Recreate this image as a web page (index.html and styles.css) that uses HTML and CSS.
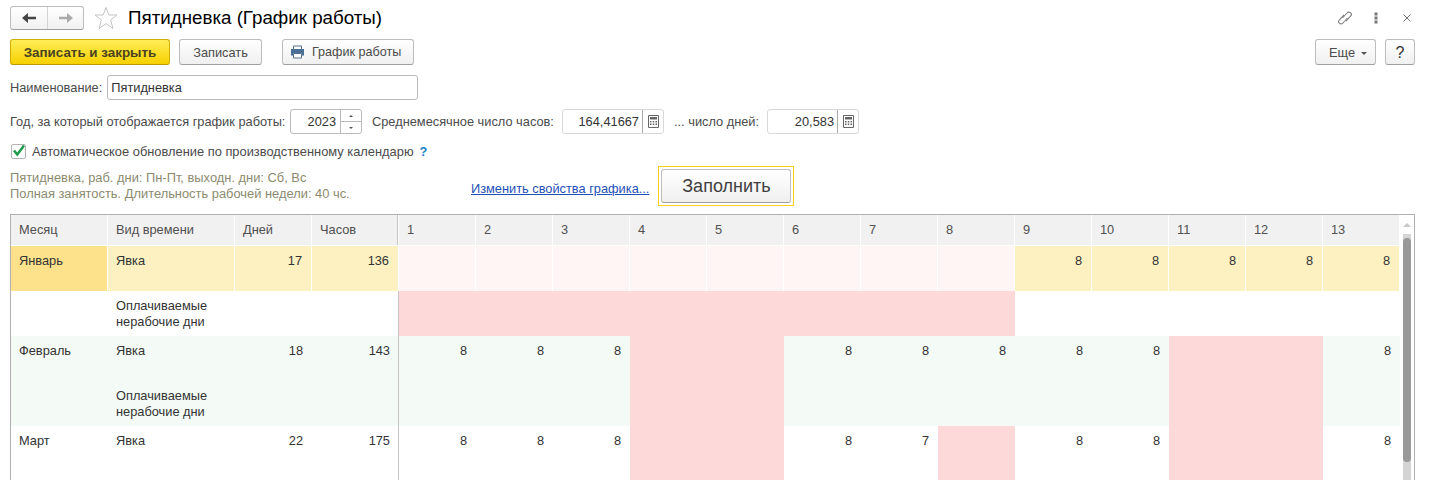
FILE: index.html
```html
<!DOCTYPE html>
<html lang="ru">
<head>
<meta charset="utf-8">
<title>Пятидневка (График работы)</title>
<link rel="stylesheet" href="styles.css">
</head>
<body>
<div class="page">
  <header class="titlebar">
    <div class="nav">
      <span class="nav-btn nav-back"><svg width="16" height="12" viewBox="0 0 16 12"><path d="M1 6 7 1V4.700H15V7.300H7V11Z" fill="#444"/></svg></span>
      <span class="nav-btn"><svg width="16" height="12" viewBox="0 0 16 12"><path d="M15 6 9 1V4.700H1V7.300H9V11Z" fill="#aaa"/></svg></span>
    </div>
    <svg class="star" width="24" height="24" viewBox="0 0 24 24"><path d="M12 1.500 14.900 9H23L16.600 14 19 22.500 12 17.600 5 22.500 7.400 14 1 9H9.100Z" fill="#fff" stroke="#c4c4c4"/></svg>
    <h1 class="title">Пятидневка (График работы)</h1>
    <div class="win-icons">
      <svg width="16" height="16" viewBox="0 0 16 16" fill="none" stroke="#808080" stroke-width="1.100"><path d="M5.500 8 10 3a2.400 2.400 0 0 1 3.800 3L9 11"/><path d="M10.500 8 6 13a2.400 2.400 0 0 1-3.800-3L7 5"/></svg>
      <svg class="kebab" width="4" height="12" viewBox="0 0 4 12"><rect x="0.500" y="0.500" width="3" height="3" fill="#777"/><rect x="0.500" y="4.500" width="3" height="3" fill="#777"/><rect x="0.500" y="8.500" width="3" height="3" fill="#777"/></svg>
      <svg class="close" width="8" height="8" viewBox="0 0 8 8"><path d="M.5.500 7.500 7.500M7.500.500.5 7.500" stroke="#777" stroke-width="1"/></svg>
    </div>
  </header>

  <div class="toolbar">
    <button class="btn btn-primary">Записать и закрыть</button>
    <button class="btn btn-save">Записать</button>
    <button class="btn btn-print"><svg width="15" height="14" viewBox="0 0 15 14"><path d="M3.500 1H11.500V4.500H3.500Z" fill="#fff" stroke="#50708f"/><path d="M1 4H14V10.500H12V8H3V10.500H1Z" fill="#4a6f96"/><path d="M3.500 8.500H11.500V13H3.500Z" fill="#fff" stroke="#50708f"/></svg>График работы</button>
    <div class="spacer"></div>
    <button class="btn btn-more">Еще<i class="caret"></i></button>
    <button class="btn btn-help">?</button>
  </div>

  <div class="name-row">
    <label>Наименование:</label>
    <div class="field field-name">Пятидневка</div>
  </div>

  <div class="params-row">
    <label class="lbl-year">Год, за который отображается график работы:</label>
    <div class="field field-year">
      <span class="value">2023</span>
      <span class="spin"><i class="up"></i><i class="down"></i></span>
    </div>
    <label class="lbl-hours">Среднемесячное число часов:</label>
    <div class="field field-calc field-hours">
      <span class="value">164,41667</span>
      <span class="calc"><svg width="11" height="13" viewBox="0 0 11 13"><path d="M.5.500H10.500V12.500H.5Z" fill="#fff" stroke="#666"/><path d="M2 2H9V4.500H2Z" fill="#666"/><path d="M2 6H3.500V7.500H2ZM4.750 6H6.250V7.500H4.750ZM7.500 6H9V7.500H7.500ZM2 8.500H3.500V10H2ZM4.750 8.500H6.250V10H4.750ZM7.500 8.500H9V10H7.500Z" fill="#666"/></svg></span>
    </div>
    <label class="lbl-days">... число дней:</label>
    <div class="field field-calc field-days">
      <span class="value">20,583</span>
      <span class="calc"><svg width="11" height="13" viewBox="0 0 11 13"><path d="M.5.500H10.500V12.500H.5Z" fill="#fff" stroke="#666"/><path d="M2 2H9V4.500H2Z" fill="#666"/><path d="M2 6H3.500V7.500H2ZM4.750 6H6.250V7.500H4.750ZM7.500 6H9V7.500H7.500ZM2 8.500H3.500V10H2ZM4.750 8.500H6.250V10H4.750ZM7.500 8.500H9V10H7.500Z" fill="#666"/></svg></span>
    </div>
  </div>

  <div class="check-row">
    <span class="checkbox"><svg width="15" height="14" viewBox="0 0 15 14"><path d="M3 6.500 6.300 10.500 13 1.500" fill="none" stroke="#1f9a4b" stroke-width="2.500"/></svg></span>
    <span class="check-label">Автоматическое обновление по производственному календарю</span>
    <span class="hint">?</span>
  </div>

  <div class="info-row">
    <div class="info-text">Пятидневка, раб. дни: Пн-Пт, выходн. дни: Сб, Вс<br>Полная занятость. Длительность рабочей недели: 40 чс.</div>
    <a class="link">Изменить свойства графика...</a>
    <div class="fill-frame"><button class="btn btn-fill">Заполнить</button></div>
  </div>

  <div class="table-wrap">
    <div class="grid">
      <div class="th">Месяц</div><div class="th">Вид времени</div><div class="th">Дней</div><div class="th sep">Часов</div>
      <div class="th">1</div><div class="th">2</div><div class="th">3</div><div class="th">4</div><div class="th">5</div><div class="th">6</div><div class="th">7</div><div class="th">8</div><div class="th">9</div><div class="th">10</div><div class="th">11</div><div class="th">12</div><div class="th">13</div>

      <div class="td cur-month">Январь</div><div class="td cur">Явка</div><div class="td cur num">17</div><div class="td cur num">136</div>
      <div class="td off-soft"></div><div class="td off-soft"></div><div class="td off-soft"></div><div class="td off-soft"></div><div class="td off-soft"></div><div class="td off-soft"></div><div class="td off-soft"></div><div class="td off-soft"></div>
      <div class="td cur num">8</div><div class="td cur num">8</div><div class="td cur num">8</div><div class="td cur num">8</div><div class="td cur num">8</div>

      <div class="td"></div><div class="td two">Оплачиваемые<br>нерабочие дни</div><div class="td"></div><div class="td sep"></div>
      <div class="td off"></div><div class="td off"></div><div class="td off"></div><div class="td off"></div><div class="td off"></div><div class="td off"></div><div class="td off"></div><div class="td off"></div>
      <div class="td"></div><div class="td"></div><div class="td"></div><div class="td"></div><div class="td"></div>

      <div class="td alt">Февраль</div><div class="td alt">Явка</div><div class="td alt num">18</div><div class="td alt num sep">143</div>
      <div class="td alt num">8</div><div class="td alt num">8</div><div class="td alt num">8</div><div class="td off span2"></div><div class="td off span2"></div><div class="td alt num">8</div><div class="td alt num">8</div><div class="td alt num">8</div><div class="td alt num">8</div><div class="td alt num">8</div><div class="td off span2"></div><div class="td off span2"></div><div class="td alt num">8</div>

      <div class="td alt"></div><div class="td alt two">Оплачиваемые<br>нерабочие дни</div><div class="td alt"></div><div class="td alt sep"></div>
      <div class="td alt"></div><div class="td alt"></div><div class="td alt"></div><div class="td alt"></div><div class="td alt"></div><div class="td alt"></div><div class="td alt"></div><div class="td alt"></div><div class="td alt"></div>

      <div class="td">Март</div><div class="td">Явка</div><div class="td num">22</div><div class="td num sep">175</div>
      <div class="td num">8</div><div class="td num">8</div><div class="td num">8</div><div class="td off"></div><div class="td off"></div><div class="td num">8</div><div class="td num">7</div><div class="td off"></div><div class="td num">8</div><div class="td num">8</div><div class="td off"></div><div class="td off"></div><div class="td num">8</div>
    </div>
    <div class="scrollbar">
      <i class="scroll-up"></i>
      <div class="scroll-thumb"></div>
    </div>
  </div>
</div>
</body>
</html>
```
FILE: styles.css
```css
* { box-sizing: border-box; }
html, body { margin: 0; padding: 0; height: 480px; overflow: hidden; background: #fff; }
body { font: 12.8px/15px "Liberation Sans", Arial, sans-serif; color: #4b4b4b; }
.page { padding: 5px 14px 0 10px; width: 1429px; }
label { white-space: nowrap; }

.titlebar { display: flex; align-items: center; height: 25px; }
.nav { display: flex; width: 74px; height: 24px; border: 1px solid #bdbdbd; border-bottom-color: #9f9f9f; border-radius: 3px; background: linear-gradient(#fff, #f1f1f1); }
.nav-btn { flex: 1; display: flex; align-items: center; justify-content: center; }
.nav-back { border-right: 1px solid #d4d4d4; flex: 0 0 37px; }
.star { margin-left: 10px; }
.title { margin: 0 0 0 10px; font-size: 18.75px; line-height: 25px; font-weight: normal; color: #000; }
.win-icons { margin-left: auto; display: flex; align-items: center; padding-right: 4px; }
.kebab { margin-left: 21px; }
.close { margin-left: 25px; }

.btn { font: 12.8px/15px "Liberation Sans", Arial, sans-serif; color: #4b4b4b; height: 26px; padding: 0; border: 1px solid #bdbdbd; border-bottom-color: #9f9f9f; border-radius: 3px; background: linear-gradient(#fff, #f0f0f0); display: flex; align-items: center; justify-content: center; }
.toolbar { display: flex; margin-top: 9px; height: 26px; }
.btn-primary { width: 160px; font-size: 13.4px; font-weight: bold; color: #4b4320; border-color: #cfae00; border-bottom-color: #b89b00; background: linear-gradient(#ffee58, #f6d000); }
.btn-save { width: 83px; margin-left: 9px; }
.btn-print { width: 132px; margin-left: 20px; gap: 7px; justify-content: flex-start; padding-left: 7px; font-size: 12.6px; }
.spacer { flex: 1; }
.btn-more { width: 61px; padding-left: 5px; }
.caret { margin-left: 6px; margin-top: 2px; border: 3px solid transparent; border-top: 3px solid #555; border-bottom: 0; }
.btn-help { width: 30px; margin-left: 9px; font-size: 16px; color: #333; }

.field { border: 1px solid #bbb; border-radius: 3px; height: 25px; background: #fff; display: flex; align-items: center; color: #333; }
.name-row { display: flex; align-items: center; margin-top: 10px; gap: 5px; }
.field-name { width: 311px; padding-left: 3px; }

.params-row { display: flex; align-items: center; margin-top: 9px; }
.params-row .value { flex: 1; text-align: right; padding-right: 3px; }
.lbl-year { width: 274px; }
.field-year { width: 72px; margin-left: 6px; }
.field-year .value { padding-right: 4px; }
.spin { width: 21px; height: 23px; border-left: 1px solid #bbb; display: flex; flex-direction: column; }
.spin i { flex: 1; display: flex; align-items: center; justify-content: center; }
.spin .up { border-bottom: 1px solid #bbb; }
.spin .up::after { content: ""; border: 2px solid transparent; border-bottom: 2px solid #555; border-top: 0; }
.spin .down::after { content: ""; border: 2px solid transparent; border-top: 2px solid #555; border-bottom: 0; }
.lbl-hours { width: 184px; margin-left: 10px; }
.field-calc { border-color: #d8d8d8; }
.field-hours { width: 102px; margin-left: 6px; }
.field-days { width: 92px; margin-left: 5px; }
.lbl-days { width: 88px; margin-left: 10px; }
.calc { width: 21px; height: 23px; border-left: 1px solid #aaa; display: flex; align-items: center; justify-content: center; }

.check-row { display: flex; align-items: center; margin-top: 8px; height: 18px; }
.checkbox { width: 15px; height: 15px; border: 1px solid #b5b5b5; border-radius: 2px; margin: 0 6px 0 1px; display: flex; align-items: center; justify-content: center; background: #fff; }
.checkbox svg { flex: none; }
.check-label { font-size: 12.86px; }
.hint { color: #1a80c4; margin-left: 6px; font-weight: bold; }

.info-row { display: flex; align-items: flex-start; height: 48px; margin-top: 5px; }
.info-text { width: 461px; margin-top: 5px; font-size: 12.88px; line-height: 16px; color: #8b8b70; }
.link { color: #1f50b8; text-decoration: underline; margin-top: 16px; white-space: nowrap; }
.fill-frame { margin-left: 9px; margin-top: 1px; width: 136px; height: 40px; border: 1px solid #f8cf1e; padding: 2px; }
.btn-fill { width: 130px; height: 34px; font-size: 18px; line-height: 22px; color: #404040; }

.table-wrap { display: flex; width: 1405px; border: 1px solid #b0b0b0; border-bottom: 0; height: 270px; margin-top: 1px; overflow: hidden; }
.grid { display: grid; flex: none; grid-template-columns: 97px 127px 77px 87px repeat(13, 77px); grid-template-rows: 31px 45px 45px 45px 45px 60px; align-content: start; }
.th { background: #f1f1f1; padding: 7px 8px; border-right: 1px solid #fff; border-bottom: 1px solid #fff; color: #505050; }
.td { padding: 7px 8px 5px; color: #333; background: #fff; white-space: nowrap; }
.sep { box-shadow: inset -1px 0 #c4c4c4; }
.td.two { padding-top: 7px; line-height: 16px; }
.num { text-align: right; }
.td.num { padding-right: 9px; }
.cur { background: #fdf1c2; border-right: 1px solid #fff; }
.cur-month { background: #fee28b; border-right: 1px solid #fff; }
.off-soft { background: #fff5f4; border-right: 1px solid #fff; }
.off { background: #fdd9d9; }
.alt { background: #f4fbf6; }
.span2 { grid-row: span 2; }

.scrollbar { flex: 1; display: flex; flex-direction: column; align-items: center; background: linear-gradient(to right, transparent 3px, #d4d4d4 3px, #d4d4d4 11px, transparent 11px); background-position: 0 19px; background-repeat: no-repeat; }
.scroll-up { margin-top: 8px; border: 4px solid transparent; border-bottom: 4px solid #c8c8c8; border-top: 0; }
.scroll-thumb { margin-top: 11px; width: 8px; height: 224px; border-radius: 4px; background: #999; }
```
